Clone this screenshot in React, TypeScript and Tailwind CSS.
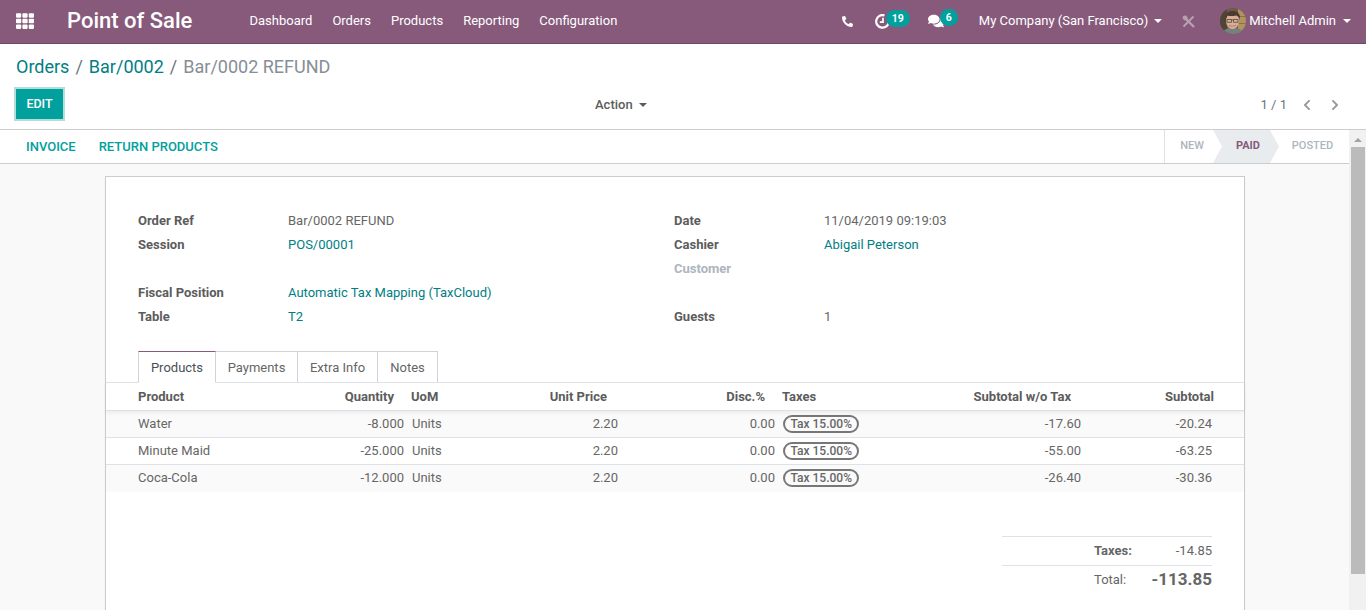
import { FaChevronLeft, FaChevronRight, FaComments, FaPhone, FaTh } from "react-icons/fa"

const navItems = ["Dashboard", "Orders", "Products", "Reporting", "Configuration"]

const rows = [
  { name: "Water", qty: "-8.000", sub: "-17.60", total: "-20.24", bg: "bg-[#fafafa]" },
  { name: "Minute Maid", qty: "-25.000", sub: "-55.00", total: "-63.25", bg: "bg-white" },
  { name: "Coca-Cola", qty: "-12.000", sub: "-26.40", total: "-30.36", bg: "bg-[#fafafa]" },
]

const Avatar = () => (
  <svg width="26" height="26" viewBox="0 0 26 26" className="rounded-full">
    <rect width="26" height="26" fill="#6f5a45" />
    <rect x="0" y="0" width="7" height="26" fill="#4f4437" />
    <rect x="18" y="0" width="8" height="26" fill="#b0935f" />
    <rect x="18" y="8" width="8" height="1" fill="#8a7048" />
    <rect x="18" y="15" width="8" height="1" fill="#8a7048" />
    <path d="M2 26c1-5 6-6 11-6s10 1 11 6z" fill="#77807f" />
    <ellipse cx="12.500" cy="13" rx="6.500" ry="8" fill="#dcae93" />
    <path d="M5.500 12C5 5 8 3 13 3s7.500 3 7 9c-1-3-2-4-4-4.500-3 .8-7 .6-8.500 0C6.500 8.500 6 10 5.500 12z" fill="#4a3a30" />
    <path d="M7 11.500h4.500v2.800H7zM13.500 11.500H18v2.800h-4.500zM11.500 12h2" fill="none" stroke="#3a3a3a" strokeWidth="0.700" />
    <path d="M9 17.300c2.300 1.800 5 1.800 7 0-2 .5-5 .5-7 0z" fill="#fff" stroke="#8d5a4c" strokeWidth="0.500" />
  </svg>
)

const ActivityIcon = () => (
  <svg width="15" height="15" viewBox="0 0 15 15" fill="none" stroke="#fff" strokeWidth="2.200">
    <path d="M9.500 1.400A6.300 6.300 0 1 0 13.800 7.500" />
    <path d="M8 3.800v4.400H4.800" strokeWidth="1.700" />
  </svg>
)

const ToolsIcon = () => (
  <svg width="13" height="13" viewBox="0 0 13 13" fill="none" stroke="#b7a0b1">
    <path d="M4 4l8 8" strokeWidth="2.400" />
    <path d="M1 1.200l-.2 2.300 1.700 1.700 2.600-.4.400-2.600L3.800.500z" fill="#b7a0b1" strokeWidth="0.300" />
    <path d="M11.500 1.500L1.500 11.500" strokeWidth="2" />
  </svg>
)

const Caret = ({ className }: { className: string }) => (
  <span className={`h-0 w-0 border-x-[4px] border-t-[4px] border-x-transparent ${className}`} />
)

const Badge = ({ children, left }: { children: string; left: string }) => (
  <span className={`absolute -top-[4px] h-[17px] rounded-full bg-[#00a09d] px-[6px] text-[10.500px] font-bold leading-[17px] text-white ${left}`}>
    {children}
  </span>
)

const Label = ({ children, muted }: { children: string; muted?: boolean }) => (
  <div className={`w-[150px] font-bold ${muted ? "text-[#adb5bd]" : "text-[#5c5c5c]"}`}>{children}</div>
)

const colsClass = "grid grid-cols-[32px_166px_104px_100px_114px_157px_179px_127px_131px]"

function Navbar() {
  return (
    <header className="flex h-[44px] items-center border-b border-[#6d4a64] bg-[#875a7b] pb-[1px] text-[13px] text-white">
      <FaTh className="ml-[16px] text-[18px]" />
      <span className="ml-[33px] w-[182.500px] text-[22px] font-medium leading-none">Point of Sale</span>
      <nav className="flex gap-[20px]">
        {navItems.map((item) => (
          <span key={item}>{item}</span>
        ))}
      </nav>
      <div className="ml-auto flex items-center">
        <FaPhone className="-scale-x-100 text-[11px]" />
        <span className="relative ml-[22px] flex">
          <ActivityIcon />
          <Badge left="left-[11px]">19</Badge>
        </span>
        <span className="relative ml-[38px] flex">
          <FaComments className="text-[16px]" />
          <Badge left="left-[12px]">6</Badge>
        </span>
        <span className="ml-[35px]">My Company (San Francisco)</span>
        <Caret className="ml-[6px] border-t-white" />
        <span className="ml-[20px] flex">
          <ToolsIcon />
        </span>
        <span className="ml-[25px] flex">
          <Avatar />
        </span>
        <span className="ml-[3px]">Mitchell Admin</span>
        <Caret className="ml-[7px] mr-[15px] border-t-white" />
      </div>
    </header>
  )
}

function ControlPanel() {
  return (
    <div className="h-[86px] border-b border-[#cccccc] bg-white">
      <div className="flex h-[45px] items-start pl-[16px] pt-[11px] text-[18px] leading-[24px]">
        <span className="text-[#017e84]">Orders</span>
        <span className="mx-[6px] text-[#6c757d]">/</span>
        <span className="text-[#017e84]">Bar/0002</span>
        <span className="mx-[6px] text-[#6c757d]">/</span>
        <span className="text-[#868e96]">Bar/0002 REFUND</span>
      </div>
      <div className="flex h-[40px] items-start pl-[16px] pr-[25px] text-[13px]">
        <button className="h-[30px] w-[47px] bg-[#00a09d] pt-[1px] text-[12.500px] font-medium text-white shadow-[0_0_0_2px_#b2dfde]">
          EDIT
        </button>
        <div className="ml-[532px] mt-[6px] flex items-center text-[#5c5c5c]">
          <span className="font-medium">Action</span>
          <Caret className="ml-[6px] border-t-[#5c5c5c]" />
        </div>
        <div className="ml-auto mt-[6px] flex items-center text-[#6c757d]">
          <span>1 / 1</span>
          <FaChevronLeft className="ml-[14px] text-[12px] text-[#999999]" />
          <FaChevronRight className="ml-[16px] text-[12px] text-[#999999]" />
        </div>
      </div>
    </div>
  )
}

function StatusBar() {
  return (
    <div className="flex h-[34px] items-center justify-between border-b border-[#cccccc] bg-white pr-[17px]">
      <div className="flex gap-[23px] pl-[26px] text-[13px] font-medium text-[#00a09d]">
        <span>INVOICE</span>
        <span>RETURN PRODUCTS</span>
      </div>
      <div className="flex h-full items-center border-l border-[#dee2e6] text-[11px] font-medium text-[#adb5bd]">
        <span className="w-[48px] pl-[6px] text-center">NEW</span>
        <span className="flex h-full w-[66px] items-center justify-center bg-[#e9ecef] pl-[4px] font-bold text-[#875a7b] [clip-path:polygon(0_0,calc(100%-9px)_0,100%_50%,calc(100%-9px)_100%,0_100%,9px_50%)]">
          PAID
        </span>
        <span className="w-[70px] pr-[3px] text-center">POSTED</span>
      </div>
    </div>
  )
}

function OrderTable() {
  return (
    <div className="mt-[-1px]">
      <div className={`${colsClass} relative z-10 h-[29px] items-center whitespace-nowrap border-b border-t border-[#dee2e6] bg-white font-bold text-[#5c5c5c] shadow-[0_2px_4px_rgba(0,0,0,0.06)]`}>
        <span />
        <span>Product</span>
        <span className="pr-[14px] text-right">Quantity</span>
        <span className="pl-[3px]">UoM</span>
        <span className="pr-[15px] text-right">Unit Price</span>
        <span className="pr-[14px] text-right">Disc.%</span>
        <span className="pl-[3px]">Taxes</span>
        <span className="pr-[14px] text-right">Subtotal w/o Tax</span>
        <span className="pr-[2px] text-right">Subtotal</span>
      </div>
      {rows.map((row) => (
        <div key={row.name} className={`${colsClass} h-[27px] items-center border-b border-[#dee2e6] last:border-transparent ${row.bg}`}>
          <span />
          <span>{row.name}</span>
          <span className="pr-[4px] text-right">{row.qty}</span>
          <span className="pl-[4px]">Units</span>
          <span className="pr-[4px] text-right">2.20</span>
          <span className="pr-[4px] text-right">0.00</span>
          <span className="pl-[4px]">
            <span className="inline-block h-[18px] rounded-full border-2 border-[#777777] px-[5.500px] text-[12px] font-medium leading-[14px]">
              Tax 15.00%
            </span>
          </span>
          <span className="pr-[4px] text-right">{row.sub}</span>
          <span className="pr-[4px] text-right">{row.total}</span>
        </div>
      ))}
    </div>
  )
}

function Sheet() {
  return (
    <div className="ml-[105px] mt-[12px] h-[600px] w-[1140px] border border-[#ccc] bg-white text-[13px] text-[#666666] shadow-[0_1px_2px_rgba(0,0,0,0.05)]">
      <div className="flex pl-[32px] pt-[32px] leading-[24px]">
        <div className="w-[536px]">
          <div className="flex">
            <Label>Order Ref</Label>
            <span>Bar/0002 REFUND</span>
          </div>
          <div className="flex">
            <Label>Session</Label>
            <span className="text-[#017e84]">POS/00001</span>
          </div>
          <div className="h-[24px]" />
          <div className="flex">
            <Label>Fiscal Position</Label>
            <span className="text-[#017e84]">Automatic Tax Mapping (TaxCloud)</span>
          </div>
          <div className="flex">
            <Label>Table</Label>
            <span className="text-[#017e84]">T2</span>
          </div>
        </div>
        <div>
          <div className="flex">
            <Label>Date</Label>
            <span>11/04/2019 09:19:03</span>
          </div>
          <div className="flex">
            <Label>Cashier</Label>
            <span className="text-[#017e84]">Abigail Peterson</span>
          </div>
          <div className="flex">
            <Label muted>Customer</Label>
          </div>
          <div className="h-[24px]" />
          <div className="flex">
            <Label>Guests</Label>
            <span>1</span>
          </div>
        </div>
      </div>
      <div className="mt-[22px] flex h-[32px] border-b border-[#ced4da] pl-[32px]">
        <span className="z-20 flex h-[32px] w-[78px] items-center justify-center border border-[#ced4da] border-b-white border-t-[#875a7b] bg-white pt-[1px] text-[#495057]">
          Products
        </span>
        <span className="-ml-px flex h-[31px] w-[83px] items-center justify-center border border-b-0 border-[#ced4da] pt-[1px]">
          Payments
        </span>
        <span className="-ml-px flex h-[31px] w-[81px] items-center justify-center border border-b-0 border-[#ced4da] pt-[1px]">
          Extra Info
        </span>
        <span className="-ml-px flex h-[31px] w-[61px] items-center justify-center border border-b-0 border-[#ced4da] pt-[1px]">
          Notes
        </span>
      </div>
      <OrderTable />
      <div className="ml-auto mr-[32px] mt-[44px] w-[210px]">
        <div className="flex h-[30px] items-center justify-between border-b border-t border-[#dee2e6]">
          <span className="ml-[92px] font-bold">Taxes:</span>
          <span>-14.85</span>
        </div>
        <div className="flex h-[27px] items-center">
          <span className="ml-[92px]">Total:</span>
          <span className="ml-auto text-[17px] font-bold">-113.85</span>
        </div>
      </div>
    </div>
  )
}

function Scrollbar() {
  return (
    <div className="absolute bottom-0 right-0 top-[130px] flex w-[17px] flex-col items-start bg-[#f1f1f1] pl-[2px]">
      <div className="ml-[3px] mt-[8px] h-0 w-0 border-x-[4px] border-b-[4px] border-x-transparent border-b-[#a3a3a3]" />
      <div className="mt-[5px] h-[427px] w-[14px] bg-[#bbbbbb]" />
    </div>
  )
}

export default function App() {
  return (
    <div className="relative h-[610px] w-[1366px] overflow-hidden bg-[#f9f9f9] font-['Roboto',sans-serif]">
      <Navbar />
      <ControlPanel />
      <StatusBar />
      <Sheet />
      <Scrollbar />
    </div>
  )
}
